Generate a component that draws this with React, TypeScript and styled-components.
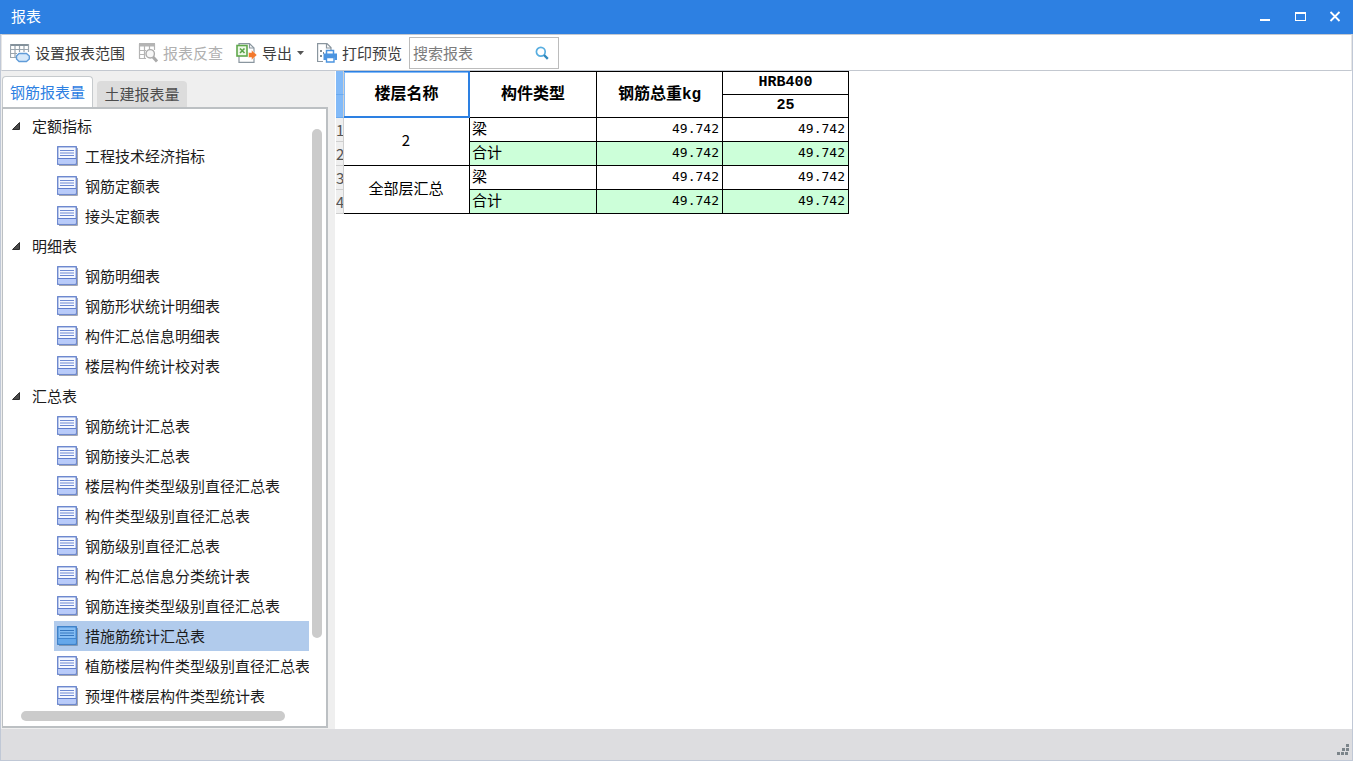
import React, { useState } from "react";
import styled, { createGlobalStyle } from "styled-components";

const GlobalStyle = createGlobalStyle`
  * { box-sizing: border-box; }
  body { margin: 0; background: #efefef; }
  button, input, table { font: inherit; color: inherit; }
  button { border: 0; padding: 0; background: none; cursor: pointer; }
  ul { list-style: none; margin: 0; padding: 0; }
`;

const Window = styled.div`
  min-height: 100vh;
  display: flex;
  flex-direction: column;
  border: 1px solid #c0c8d6;
  border-top: 0;
  background: #efefef;
  font-family: "Noto Sans CJK SC", sans-serif;
  font-size: 15px;
  line-height: 20px;
  color: #1c1c1c;
`;

const TitleBar = styled.header`
  height: 34px;
  margin: 0 -1px;
  padding: 0 11px 2px;
  display: flex;
  align-items: center;
  justify-content: space-between;
  background: #2d80e2;
  color: #fff;
`;

const Title = styled.h1`
  margin: 0;
  font-size: 15px;
  font-weight: 400;
`;

const WindowButtons = styled.div`
  display: flex;
  gap: 21px;
`;

const WindowButton = styled.button`
  width: 14px;
  height: 14px;
  svg { display: block; }
`;

const ToolBar = styled.div`
  height: 37px;
  padding: 0 4px;
  display: flex;
  align-items: center;
  gap: 5px;
  background: #fff;
  border: 1px solid #c3c8d0;
  border-left-color: #e6e6e6;
  border-right-color: #e6e6e6;
`;

const ToolButton = styled.button`
  height: 26px;
  padding: 0 4px;
  display: flex;
  align-items: center;
  gap: 5px;
  border-radius: 3px;
  color: #3c3c3c;
  white-space: nowrap;
  &:disabled { color: #b0b0b0; cursor: default; }
  svg { flex: none; }
`;

const SearchBox = styled.div`
  width: 150px;
  height: 32px;
  margin-left: -2px;
  display: flex;
  align-items: center;
  padding: 0 9px 0 3px;
  border: 1px solid #bcbcbc;
  background: #fff;
  button { display: flex; }
`;

const SearchInput = styled.input`
  flex: 1;
  min-width: 0;
  padding: 0;
  border: 0;
  outline: 0;
  background: none;
  &::placeholder { color: #7c7c7c; opacity: 1; }
`;

const Main = styled.main`
  flex: 1;
  display: grid;
  grid-template-columns: 327px minmax(0, 1fr);
  column-gap: 7px;
`;

const Sidebar = styled.nav`
  display: flex;
  flex-direction: column;
  padding: 5px 0 1px 1px;
`;

const Tabs = styled.div`
  display: flex;
  align-items: flex-end;
  gap: 4px;
`;

const Tab = styled.button<{ $active: boolean }>`
  width: ${(p) => (p.$active ? 91 : 90)}px;
  height: ${(p) => (p.$active ? 31 : 26)}px;
  border: ${(p) => (p.$active ? "1px solid #c6cacd" : "0")};
  border-bottom: 0;
  border-radius: 4px 4px 0 0;
  background: ${(p) => (p.$active ? "#fff" : "#dcdcdc")};
  color: ${(p) => (p.$active ? "#2d80e2" : "#4c4c4c")};
  white-space: nowrap;
`;

const TreePanel = styled.div`
  flex: 1;
  display: grid;
  grid-template-columns: minmax(0, 1fr) 17px;
  grid-template-rows: 1fr 15px;
  padding-top: 2px;
  border: 2px solid #bcc0c3;
  border-left-width: 1px;
  background: #fff;
`;

const Tree = styled.ul`
  overflow: hidden;
`;

const GroupButton = styled.button`
  height: 30px;
  padding-left: 9px;
  display: flex;
  align-items: center;
  gap: 11px;
`;

const ReportList = styled.ul`
  padding-left: 51px;
`;

const ReportButton = styled.button<{ $selected: boolean }>`
  width: 100%;
  height: 30px;
  padding-left: 3px;
  display: flex;
  align-items: center;
  gap: 7px;
  background: ${(p) => (p.$selected ? "#b1cbec" : "transparent")};
  white-space: nowrap;
  svg { flex: none; }
`;

const VerticalTrack = styled.div`
  padding: 18px 4px 73px 3px;
  display: flex;
`;

const HorizontalTrack = styled.div`
  grid-column: 1 / -1;
  padding: 0 41px 5px 18px;
  display: flex;
`;

const Thumb = styled.div`
  flex: 1;
  border-radius: 5px;
  background: #cbcbcb;
`;

const ReportPane = styled.section`
  min-width: 0;
  padding-left: 1px;
  overflow: auto;
  background: #fff;
`;

const Grid = styled.table`
  width: 513px;
  table-layout: fixed;
  border-collapse: separate;
  border-spacing: 0;
  color: #000;
  line-height: 18px;
`;

const HeadLine = styled.tr<{ $first?: boolean }>`
  height: ${(p) => (p.$first ? 24 : 23)}px;
`;

const BodyLine = styled.tr`
  height: 24px;
`;

const RowMark = styled.th<{ $selected?: boolean }>`
  height: ${(p) => (p.$selected ? 23 : 24)}px;
  padding: 0;
  overflow: hidden;
  border-right: 1px solid #d0d0d0;
  border-bottom: 1px solid ${(p) => (p.$selected ? "#6aaaf0" : "#cfcfcf")};
  background: ${(p) => (p.$selected ? "#82baf8" : "#efefef")};
  color: #555;
  font-weight: 400;
  text-align: left;
`;

const HeadCell = styled.th<{ $top?: boolean; $large?: boolean; $selected?: boolean }>`
  padding: 0;
  border-right: 1px solid #000;
  border-bottom: 1px solid #000;
  border-top: ${(p) => (p.$top ? "1px solid #000" : "0")};
  font-family: "Liberation Mono", "Noto Sans CJK SC", monospace;
  font-size: ${(p) => (p.$large ? 16 : 15)}px;
  font-weight: 700;
  ${(p) =>
    p.$selected &&
    "border-color: #2d80e2; box-shadow: inset -1px -1px #2d80e2, inset 1px 1px #82baf8;"}
`;

const Cell = styled.td<{ $align?: string; $total?: boolean }>`
  padding: 0 3px 3px 2px;
  border-right: 1px solid #000;
  border-bottom: 1px solid #000;
  text-align: ${(p) => p.$align || "left"};
  background: ${(p) => (p.$total ? "#ccffd9" : "#fff")};
`;

const Figure = styled.span`
  font-family: "DejaVu Sans Mono", monospace;
  font-size: 13px;
`;

const StatusBar = styled.footer`
  height: 32px;
  padding: 0 3px 4px 0;
  display: flex;
  align-items: flex-end;
  justify-content: flex-end;
  background: #dddde0;
  border-bottom: 1px solid #c0c8d6;
`;

const RangeIcon = () => (
  <svg width="20" height="20" viewBox="0 0 20 20" fill="none" aria-hidden="true">
    <path d="M0 1H19V3H0Z" fill="#84919b" />
    <path d="M.5 1V14.500H6M18.500 1V9M.5 6.500H18.500M.5 10.500H7M5 3V14M9.500 3V9M14 3V9" stroke="#9aa5ae" strokeWidth="1.200" />
    <path d="M9 10.500H16.500L19.300 13V16L16.500 18.500H9L6.500 16V13Z" fill="#d6e9fb" stroke="#5f9bd8" strokeWidth="1.400" strokeLinejoin="round" />
  </svg>
);

const LookupIcon = () => (
  <svg width="20" height="20" viewBox="0 0 20 20" fill="none" aria-hidden="true">
    <path d="M1 0H17V3.500H1Z" fill="#b4b4b4" />
    <path d="M1.500 1V15.500H8M16.500 1V7M6.500 3V15M11.500 3V6M1 7.500H8M1 11.500H7" stroke="#b4b4b4" strokeWidth="1.200" />
    <circle cx="12.200" cy="10.800" r="4.200" fill="#f7f7f7" stroke="#aaa" strokeWidth="1.400" />
    <path d="M15 14L19 18.500" stroke="#aaa" strokeWidth="3" />
  </svg>
);

const ExportIcon = () => (
  <svg width="21" height="20" viewBox="0 0 21 20" fill="none" aria-hidden="true">
    <path d="M3 2V.6H13.500L18 5V19.400H3V13" fill="#fff" stroke="#8a969f" strokeWidth="1.200" />
    <path d="M13.500 .6V5H18" stroke="#8a969f" strokeWidth="1.200" />
    <rect x="1" y="2.500" width="10" height="10.500" fill="#edf8e7" stroke="#5fa84c" strokeWidth="1.600" />
    <path d="M4 5.500L8.500 10M8.500 5.500L4 10" stroke="#5aa348" strokeWidth="1.600" />
    <path d="M12.500 9.500H15.500V7L21 12L15.500 17V14.500H12.500Z" fill="#f3782b" stroke="#fff" strokeWidth=".5" />
  </svg>
);

const PrintIcon = () => (
  <svg width="20" height="20" viewBox="0 0 20 20" fill="none" aria-hidden="true">
    <path d="M6 18.500H.6V.6H10L14 4.500V7M9.500 1V5H14" stroke="#8a969f" strokeWidth="1.200" />
    <path d="M3 7H5V9H3ZM6 9H7V11H6ZM3 12H5V14H3Z" fill="#7d8992" />
    <path d="M9.500 11V7.500H16.500V11" fill="#fff" stroke="#4b94e0" strokeWidth="1.500" />
    <path d="M6.500 10.500H20V17H17.500V14.500H9V17H6.500Z" fill="#4b94e0" />
    <path d="M9.500 14.500H17V19H9.500Z" fill="#fff" stroke="#4b94e0" strokeWidth="1.400" />
  </svg>
);

const CaretIcon = () => (
  <svg width="7" height="4" viewBox="0 0 7 4" aria-hidden="true">
    <path d="M0 0H7L3.500 4Z" fill="#555" />
  </svg>
);

const SearchIcon = () => (
  <svg width="14" height="14" viewBox="0 0 14 14" fill="none" aria-hidden="true">
    <circle cx="5.800" cy="5.800" r="4.400" stroke="#58aee0" strokeWidth="1.700" />
    <path d="M9 9L12.800 12.800" stroke="#3289bd" strokeWidth="2.400" />
  </svg>
);

const ExpandedIcon = () => (
  <svg width="9" height="8" viewBox="0 0 9 8" aria-hidden="true">
    <path d="M7.500 .5V7.500H.5Z" fill="#4a4a4a" stroke="#2c2c2c" />
  </svg>
);

const ReportIcon = ({ selected }: { selected: boolean }) => (
  <svg width="21" height="20" viewBox="0 0 21 20" fill="none" aria-hidden="true">
    <path d="M2 19.500H20.500V2" stroke={selected ? "#7f98b5" : "#a4a7b0"} />
    <rect x=".75" y=".75" width="18.500" height="17.500" fill={selected ? "#85bdf3" : "#f5f8ff"} stroke={selected ? "#347bc6" : "#5f7dca"} strokeWidth="1.300" />
    <path d="M1.500 12.500H18.500V17.500H1.500Z" fill={selected ? "#65a8eb" : "#b8cbfb"} />
    <path d="M1 12.500H19" stroke={selected ? "#4186d0" : "#5f7dca"} />
    <path d="M3 4.500H17M3 7H17M3 9.500H17" stroke={selected ? "#3576c0" : "#6c89d3"} />
  </svg>
);

const GripIcon = () => (
  <svg width="12" height="12" viewBox="0 0 12 12" fill="#7c858b" aria-hidden="true">
    <path d="M9 0H12V3H9ZM5 4H8V7H5ZM9 4H12V7H9ZM0 8H3V11H0ZM4 8H7V11H4ZM8 8H11V11H8Z" />
  </svg>
);

const groups = [
  { name: "定额指标", reports: ["工程技术经济指标", "钢筋定额表", "接头定额表"] },
  {
    name: "明细表",
    reports: ["钢筋明细表", "钢筋形状统计明细表", "构件汇总信息明细表", "楼层构件统计校对表"],
  },
  {
    name: "汇总表",
    reports: [
      "钢筋统计汇总表",
      "钢筋接头汇总表",
      "楼层构件类型级别直径汇总表",
      "构件类型级别直径汇总表",
      "钢筋级别直径汇总表",
      "构件汇总信息分类统计表",
      "钢筋连接类型级别直径汇总表",
      "措施筋统计汇总表",
      "植筋楼层构件类型级别直径汇总表",
      "预埋件楼层构件类型统计表",
    ],
  },
];

const rows = [
  { floor: "2", type: "梁", weight: "49.742", total: false },
  { type: "合计", weight: "49.742", total: true },
  { floor: "全部层汇总", type: "梁", weight: "49.742", total: false },
  { type: "合计", weight: "49.742", total: true },
];

export default function App() {
  const [tab, setTab] = useState("钢筋报表量");
  const [report, setReport] = useState("措施筋统计汇总表");

  return (
    <Window>
      <GlobalStyle />
      <TitleBar>
        <Title>报表</Title>
        <WindowButtons>
          <WindowButton aria-label="最小化">
            <svg width="14" height="14" viewBox="0 0 14 14"><path d="M2 10H12V12H2Z" fill="#fff" /></svg>
          </WindowButton>
          <WindowButton aria-label="最大化">
            <svg width="14" height="14" viewBox="0 0 14 14"><path d="M2 3H13V12H2ZM3 5V11H12V5Z" fill="#fff" fillRule="evenodd" /></svg>
          </WindowButton>
          <WindowButton aria-label="关闭">
            <svg width="14" height="14" viewBox="0 0 14 14"><path d="M2.500 3L11.500 12M11.500 3L2.500 12" stroke="#fff" strokeWidth="1.800" /></svg>
          </WindowButton>
        </WindowButtons>
      </TitleBar>

      <ToolBar role="toolbar">
        <ToolButton><RangeIcon />设置报表范围</ToolButton>
        <ToolButton disabled><LookupIcon />报表反查</ToolButton>
        <ToolButton><ExportIcon />导出<CaretIcon /></ToolButton>
        <ToolButton><PrintIcon />打印预览</ToolButton>
        <SearchBox role="search">
          <SearchInput type="text" placeholder="搜索报表" aria-label="搜索报表" />
          <button aria-label="搜索"><SearchIcon /></button>
        </SearchBox>
      </ToolBar>

      <Main>
        <Sidebar>
          <Tabs role="tablist">
            {["钢筋报表量", "土建报表量"].map((name) => (
              <Tab key={name} role="tab" aria-selected={tab === name} $active={tab === name} onClick={() => setTab(name)}>
                {name}
              </Tab>
            ))}
          </Tabs>
          <TreePanel>
            <Tree>
              {groups.map((group) => (
                <li key={group.name}>
                  <GroupButton aria-expanded="true"><ExpandedIcon />{group.name}</GroupButton>
                  <ReportList>
                    {group.reports.map((name) => (
                      <li key={name}>
                        <ReportButton $selected={report === name} onClick={() => setReport(name)}>
                          <ReportIcon selected={report === name} />{name}
                        </ReportButton>
                      </li>
                    ))}
                  </ReportList>
                </li>
              ))}
            </Tree>
            <VerticalTrack><Thumb /></VerticalTrack>
            <HorizontalTrack><Thumb /></HorizontalTrack>
          </TreePanel>
        </Sidebar>

        <ReportPane>
          <Grid>
            <colgroup>
              <col width="8" /><col width="126" /><col width="127" /><col width="126" /><col width="126" />
            </colgroup>
            <thead>
              <HeadLine $first>
                <RowMark $selected />
                <HeadCell rowSpan={2} $top $large $selected>楼层名称</HeadCell>
                <HeadCell rowSpan={2} $top $large>构件类型</HeadCell>
                <HeadCell rowSpan={2} $top $large>钢筋总重kg</HeadCell>
                <HeadCell $top>HRB400</HeadCell>
              </HeadLine>
              <HeadLine>
                <RowMark $selected />
                <HeadCell>25</HeadCell>
              </HeadLine>
            </thead>
            <tbody>
              {rows.map((row, i) => (
                <BodyLine key={i}>
                  <RowMark scope="row">{i + 1}</RowMark>
                  {row.floor && <Cell rowSpan={2} $align="center">{row.floor}</Cell>}
                  <Cell $total={row.total}>{row.type}</Cell>
                  <Cell $total={row.total} $align="right"><Figure>{row.weight}</Figure></Cell>
                  <Cell $total={row.total} $align="right"><Figure>{row.weight}</Figure></Cell>
                </BodyLine>
              ))}
            </tbody>
          </Grid>
        </ReportPane>
      </Main>

      <StatusBar><GripIcon /></StatusBar>
    </Window>
  );
}
